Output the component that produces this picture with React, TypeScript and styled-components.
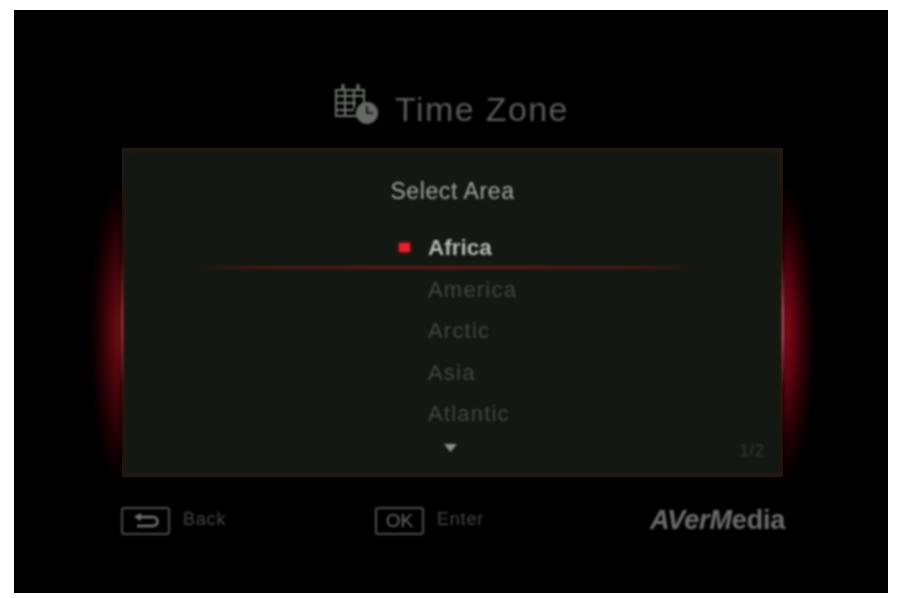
import React from "react";
import styled, { createGlobalStyle } from "styled-components";

const Global = createGlobalStyle`
  html, body { margin: 0; padding: 0; background: #fff; }
  body { font-family: "Liberation Sans", Arial, sans-serif; }
`;

const Screen = styled.div`
  width: 874px;
  height: 583px;
  margin: 10px 0 0 14px;
  background: #000;
  display: flex;
  flex-direction: column;
  overflow: hidden;
`;

const Header = styled.header`
  height: 138px;
  flex: none;
  display: flex;
  align-items: flex-start;
  justify-content: center;
  gap: 15px;
  padding: 72px 0 0 1px;
  box-sizing: border-box;
  filter: blur(1.1px);
`;

const Title = styled.h1`
  margin: 6px 0 0;
  font-size: 34px;
  line-height: 42px;
  font-weight: 400;
  letter-spacing: 1.4px;
  color: #595959;
`;

const Panel = styled.section`
  position: relative;
  width: 661px;
  height: 329px;
  margin-left: 108px;
  box-sizing: border-box;
  flex: none;
  background: #141812;
  box-shadow: inset 0 0 6px 2px #2a1a14;
  display: flex;
  flex-direction: column;
  align-items: center;
  padding-top: 28px;
`;

const Glow = styled.div<{ $side: "left" | "right" }>`
  position: absolute;
  top: 25px;
  bottom: -2px;
  width: 32px;
  ${(p) => (p.$side === "left" ? "right: 100%;" : "left: 100%;")}
  background: radial-gradient(
    ellipse 100% 50% at ${(p) => (p.$side === "left" ? "100%" : "0%")} 52%,
    ${(p) => (p.$side === "left" ? "#761018" : "#8a0a1c")} 0%,
    ${(p) => (p.$side === "left" ? "#50060c" : "#5c0410")} 35%,
    #200004 72%,
    transparent 100%
  );
  filter: blur(2px);
`;

const Edge = styled.div<{ $side: "left" | "right" }>`
  position: absolute;
  top: 110px;
  height: 130px;
  width: 2px;
  ${(p) => (p.$side === "left" ? "left: -1px;" : "right: -1px;")}
  background: linear-gradient(
    to bottom,
    transparent,
    ${(p) => (p.$side === "left" ? "#8a3a3a" : "#a85464")} 40%,
    ${(p) => (p.$side === "left" ? "#8a3a3a" : "#a85464")} 60%,
    transparent
  );
  filter: blur(0.8px);
`;

const PanelTitle = styled.h2`
  margin: 0;
  font-size: 23px;
  line-height: 30px;
  font-weight: 400;
  letter-spacing: 0.6px;
  color: #a2a69e;
  filter: blur(1.1px);
`;

const List = styled.ul`
  list-style: none;
  margin: 21px 0 0;
  padding: 0;
  width: 100%;
  display: flex;
  flex-direction: column;
`;

const Row = styled.li<{ $active?: boolean }>`
  position: relative;
  height: 41.5px;
  line-height: 41.5px;
  padding-left: 306px;
  font-size: ${(p) => (p.$active ? "22.5px" : "22px")};
  font-weight: ${(p) => (p.$active ? 700 : 400)};
  letter-spacing: ${(p) => (p.$active ? "0" : "1.2px")};
  color: ${(p) => (p.$active ? "#b8bcb4" : "#444741")};
  filter: blur(${(p) => (p.$active ? "1px" : "1.2px")});
`;

const Bullet = styled.span`
  position: absolute;
  left: 277px;
  top: 16px;
  width: 11px;
  height: 9px;
  background: #e8202c;
  box-shadow: 0 0 4px #a01018;
`;

const Divider = styled.div`
  position: absolute;
  top: 118px;
  left: 70px;
  right: 80px;
  height: 3px;
  background: linear-gradient(to right, transparent, #4a1512 12%, #641a18 50%, #4a1512 88%, transparent);
  filter: blur(0.8px);
`;

const PanelFoot = styled.div`
  position: relative;
  width: 100%;
  height: 26px;
  display: flex;
  align-items: center;
  justify-content: center;
`;

const Arrow = styled.svg`
  width: 13px;
  height: 8px;
  margin-left: -4px;
  filter: blur(0.9px);
`;

const Pager = styled.span`
  position: absolute;
  right: 18px;
  top: 7px;
  font-size: 16px;
  letter-spacing: 1px;
  color: #333a30;
  filter: blur(1.1px);
`;

const Footer = styled.footer`
  display: flex;
  align-items: center;
  padding: 28px 0 0 107px;
  filter: blur(1px);
`;

const Hint = styled.div<{ $w: number }>`
  width: ${(p) => p.$w}px;
  display: flex;
  align-items: center;
  gap: 13px;
  flex: none;
`;

const KeyCap = styled.div`
  width: 49px;
  height: 28px;
  flex: none;
  box-sizing: border-box;
  border: 2px solid #4c4c4c;
  border-radius: 3px;
  display: flex;
  align-items: center;
  justify-content: center;
  font-size: 19px;
  color: #666;
`;

const HintText = styled.span`
  font-size: 18px;
  letter-spacing: 0.8px;
  margin-top: -3px;
  color: #444;
`;

const Logo = styled.div`
  font-size: 27px;
  font-weight: 700;
  color: #6c6c6c;
  letter-spacing: -0.15px;
  & > em { font-style: italic; }
`;

const areas = ["America", "Arctic", "Asia", "Atlantic"];

export default function App() {
  return (
    <>
      <Global />
      <Screen>
        <Header>
          <svg width="46" height="44" viewBox="0 0 46 44" fill="none">
            <g stroke="#6d736b" strokeWidth="2">
              <rect x="2" y="8" width="28" height="26" />
              <path d="M2 14h28M2 21h20M2 28h18M11 8v26M20 8v18" />
              <path d="M9 2v7M24 2v7" strokeWidth="3" />
            </g>
            <circle cx="33" cy="31" r="11" fill="#666a66" />
            <path d="M33 24v7h6" stroke="#1a1a1a" strokeWidth="2" fill="none" />
          </svg>
          <Title>Time Zone</Title>
        </Header>
        <Panel>
          <Glow $side="left" />
          <Glow $side="right" />
          <Edge $side="left" />
          <Edge $side="right" />
          <PanelTitle>Select Area</PanelTitle>
          <List>
            <Row $active>
              <Bullet />
              Africa
            </Row>
            {areas.map((a) => (
              <Row key={a}>{a}</Row>
            ))}
          </List>
          <Divider />
          <PanelFoot>
            <Arrow viewBox="0 0 13 8">
              <path d="M0 0h13L6.500 8z" fill="#8c8e8a" />
            </Arrow>
            <Pager>1/2</Pager>
          </PanelFoot>
        </Panel>
        <Footer>
          <Hint $w={254}>
            <KeyCap>
              <svg width="30" height="16" viewBox="0 0 30 16" fill="none">
                <path d="M6 4h16a4.500 4.500 0 0 1 0 9H6" stroke="#777" strokeWidth="2.5" />
                <path d="M10 1 5 4l5 3" stroke="#777" strokeWidth="2" />
              </svg>
            </KeyCap>
            <HintText>Back</HintText>
          </Hint>
          <Hint $w={275}>
            <KeyCap>OK</KeyCap>
            <HintText>Enter</HintText>
          </Hint>
          <Logo>
            <em>AVerM</em>edia
          </Logo>
        </Footer>
      </Screen>
    </>
  );
}
